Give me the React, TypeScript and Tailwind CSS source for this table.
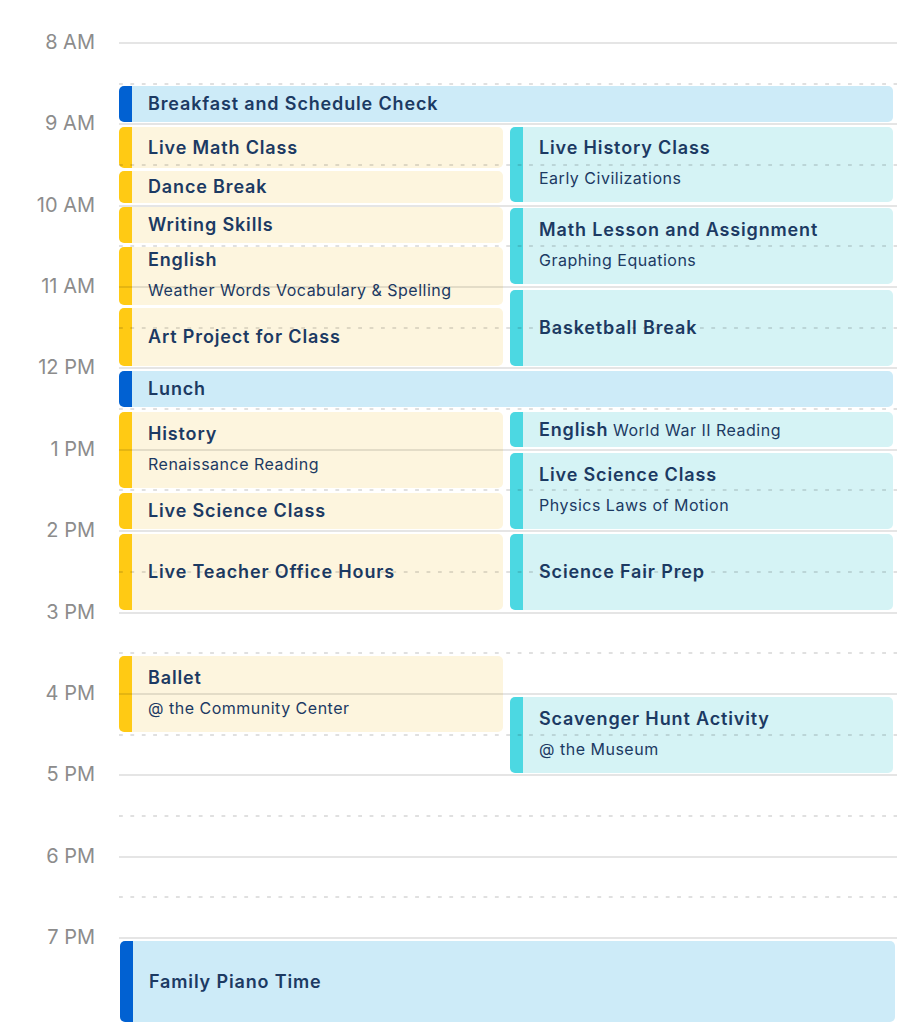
import React from "react";

type Kind = "main" | "a" | "b";
type Col = "full" | "left" | "right" | "bottom";

type CalEvent = {
  title: string;
  sub?: string;
  inline?: boolean; // subtitle on the same line as the title
  top: number;
  bottom: number;
  col: Col;
  kind: Kind;
};

const HOURS = ["8 AM", "9 AM", "10 AM", "11 AM", "12 PM", "1 PM", "2 PM", "3 PM", "4 PM", "5 PM", "6 PM", "7 PM"];

const events: CalEvent[] = [
  { title: "Breakfast and Schedule Check", top: 86, bottom: 122, col: "full", kind: "main" },
  { title: "Live Math Class", top: 127, bottom: 168, col: "left", kind: "a" },
  { title: "Dance Break", top: 171, bottom: 203, col: "left", kind: "a" },
  { title: "Writing Skills", top: 207, bottom: 243, col: "left", kind: "a" },
  { title: "English", sub: "Weather Words Vocabulary & Spelling", top: 247, bottom: 305, col: "left", kind: "a" },
  { title: "Art Project for Class", top: 308, bottom: 366, col: "left", kind: "a" },
  { title: "Live History Class", sub: "Early Civilizations", top: 127, bottom: 202, col: "right", kind: "b" },
  { title: "Math Lesson and Assignment", sub: "Graphing Equations", top: 208, bottom: 284, col: "right", kind: "b" },
  { title: "Basketball Break", top: 290, bottom: 366, col: "right", kind: "b" },
  { title: "Lunch", top: 371, bottom: 407, col: "full", kind: "main" },
  { title: "History", sub: "Renaissance Reading", top: 412, bottom: 488, col: "left", kind: "a" },
  { title: "Live Science Class", top: 493, bottom: 529, col: "left", kind: "a" },
  { title: "Live Teacher Office Hours", top: 534, bottom: 610, col: "left", kind: "a" },
  { title: "English", sub: "World War II Reading", inline: true, top: 412, bottom: 447, col: "right", kind: "b" },
  { title: "Live Science Class", sub: "Physics Laws of Motion", top: 453, bottom: 529, col: "right", kind: "b" },
  { title: "Science Fair Prep", top: 534, bottom: 610, col: "right", kind: "b" },
  { title: "Ballet", sub: "@ the Community Center", top: 656, bottom: 732, col: "left", kind: "a" },
  { title: "Scavenger Hunt Activity", sub: "@ the Museum", top: 697, bottom: 773, col: "right", kind: "b" },
  { title: "Family Piano Time", top: 941, bottom: 1022, col: "bottom", kind: "main" },
];

const colClass: Record<Col, string> = {
  full: "left-0 right-0",
  left: "left-0 w-[384px]",
  right: "left-[391px] right-0",
  bottom: "left-[1px] -right-[2px]",
};

const stripeClass: Record<Kind, string> = {
  main: "bg-[#0161d2]",
  a: "bg-[#ffca14]",
  b: "bg-[#4cd8e2]",
};

const bodyClass: Record<Kind, string> = {
  main: "bg-[#cdebf8]",
  a: "bg-[#fdf5de]",
  b: "bg-[#d5f3f5]",
};

function EventCard({ ev }: { ev: CalEvent }) {
  return (
    <div
      className={`absolute flex overflow-hidden rounded-[5px] ${colClass[ev.col]}`}
      style={{ top: ev.top, height: ev.bottom - ev.top }}
    >
      <div className={`w-[13px] shrink-0 ${stripeClass[ev.kind]}`} />
      <div className={`flex flex-1 flex-col justify-center pl-4 text-[#1c3a63] ${bodyClass[ev.kind]}`}>
        {ev.inline ? (
          <div className="leading-[26px]">
            <span className="text-[18px] font-semibold tracking-[0.85px]">{ev.title}</span>{" "}
            <span className="text-[16px] tracking-[0.5px]">{ev.sub}</span>
          </div>
        ) : ev.sub ? (
          <div className="pb-[5px]">
            <div className="text-[18px] font-semibold leading-[26px] tracking-[0.85px]">{ev.title}</div>
            <div className="mt-[6px] text-[16px] leading-[22px] tracking-[0.5px]">{ev.sub}</div>
          </div>
        ) : (
          <div className="text-[18px] font-semibold leading-[26px] tracking-[0.85px]">{ev.title}</div>
        )}
      </div>
    </div>
  );
}

export default function App() {
  return (
    <div className="relative h-[1024px] overflow-hidden bg-white pt-[42px] font-['Inter',sans-serif]">
      {/* events sit under the grid lines */}
      <div className="absolute bottom-0 left-[119px] right-[4px] top-0">
        {events.map((ev, i) => (
          <EventCard key={i} ev={ev} />
        ))}
      </div>

      {/* hour grid */}
      <div className="pointer-events-none relative z-10">
        {HOURS.map((h, i) => (
          <div key={h} className="flex h-[81.36px]">
            <div className="w-[119px] shrink-0 pr-6 text-right">
              <div className="-translate-y-1/2 text-[20px] leading-6 text-[#8c8c8c]">{h}</div>
            </div>
            <div className="flex flex-1 flex-col">
              <div className="h-[40.68px] border-t-2 border-black/10" />
              {i < HOURS.length - 1 && (
                <div className="h-[2px] bg-[linear-gradient(to_right,rgba(0,0,0,0.12)_4px,transparent_4px)] bg-[length:11.4px_2px]" />
              )}
            </div>
          </div>
        ))}
      </div>
    </div>
  );
}
